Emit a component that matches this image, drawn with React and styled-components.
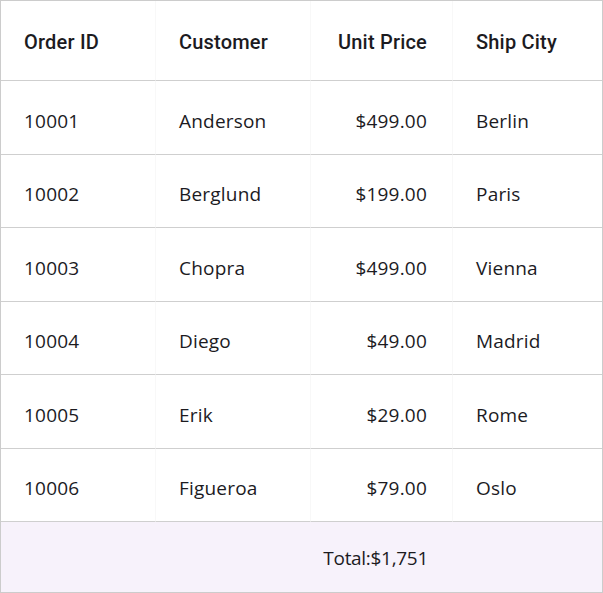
import styled, { createGlobalStyle } from "styled-components";

const GlobalStyle = createGlobalStyle`
    html, body {
        margin: 0;
        padding: 0;
        background: #ffffff;
    }
    * {
        box-sizing: border-box;
    }
`;

const Grid = styled.div`
    width: 603px;
    height: 593px;
    border: 1px solid #cccccc;
    display: grid;
    grid-template-columns: 155px 155px 142px 1fr;
    grid-template-rows: 80px repeat(6, 73.5px) 1fr;
    color: #1c1b1f;
    background: #ffffff;
`;

const HeadCell = styled.div`
    display: flex;
    align-items: center;
    justify-content: ${(p) => (p.$right ? "flex-end" : "flex-start")};
    padding: 2px 25px 0 23px;
    border-bottom: 1px solid #cfcfcf;
    border-right: ${(p) => (p.$last ? "none" : "1px solid #f8f8f8")};
    font-family: Roboto, "Liberation Sans", sans-serif;
    font-weight: 500;
    font-size: 20px;
    letter-spacing: 0.2px;
    color: #1c1b1f;
`;

const Cell = styled.div`
    display: flex;
    align-items: center;
    justify-content: ${(p) => (p.$right ? "flex-end" : "flex-start")};
    padding: 7px 25px 0 23px;
    border-bottom: 1px solid #cfcfcf;
    border-right: ${(p) => (p.$last ? "none" : "1px solid #f8f8f8")};
    font-family: "Open Sans", "Noto Sans", sans-serif;
    font-size: 19px;
    letter-spacing: 0.2px;
    color: #1c1b1f;
`;

const Footer = styled.div`
    grid-column: 1 / 4;
    display: flex;
    align-items: center;
    justify-content: flex-end;
    padding: 2px 25px 0;
    background: #f7f2fb;
    font-family: "Open Sans", "Noto Sans", sans-serif;
    font-size: 19px;
    letter-spacing: -0.3px;
    color: #1c1b1f;
`;

const FooterFill = styled.div`
    background: #f7f2fb;
`;

const columns = [
    { key: "id", title: "Order ID" },
    { key: "customer", title: "Customer" },
    { key: "price", title: "Unit Price", right: true },
    { key: "city", title: "Ship City" },
];

const orders = [
    { id: 10001, customer: "Anderson", price: 499, city: "Berlin" },
    { id: 10002, customer: "Berglund", price: 199, city: "Paris" },
    { id: 10003, customer: "Chopra", price: 499, city: "Vienna" },
    { id: 10004, customer: "Diego", price: 49, city: "Madrid" },
    { id: 10005, customer: "Erik", price: 29, city: "Rome" },
    { id: 10006, customer: "Figueroa", price: 79, city: "Oslo" },
];

const show = (key, row) => (key === "price" ? "$" + row.price.toFixed(2) : row[key]);

const App = () => {
    return (
        <>
            <GlobalStyle />
            <Grid>
                {columns.map((c, i) => (
                    <HeadCell key={c.key} $right={c.right} $last={i === columns.length - 1}>
                        {c.title}
                    </HeadCell>
                ))}
                {orders.map((row) =>
                    columns.map((c, i) => (
                        <Cell key={row.id + c.key} $right={c.right} $last={i === columns.length - 1}>
                            {show(c.key, row)}
                        </Cell>
                    ))
                )}
                <Footer>Total:$1,751</Footer>
                <FooterFill />
            </Grid>
        </>
    );
};

export default App;
